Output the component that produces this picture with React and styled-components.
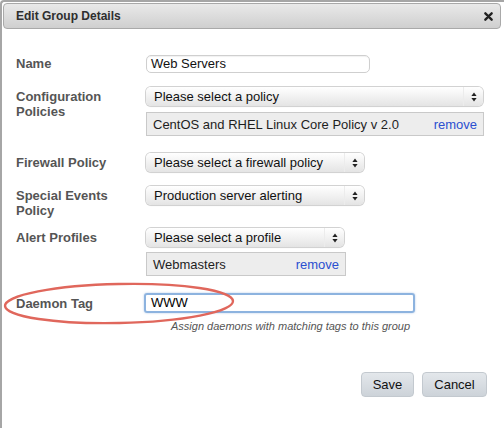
import React from 'react';
import styled, { createGlobalStyle } from 'styled-components';

const GlobalStyle = createGlobalStyle`
  html, body { margin: 0; padding: 0; background: #fff; }
  body { font-family: "Liberation Sans", Arial, Helvetica, sans-serif; }
`;

const Dialog = styled.div`
  box-sizing: border-box;
  width: 504px;
  height: 428px;
  border-top: 2px solid #a6a6a6;
  border-left: 2px solid #a6a6a6;
  border-top-left-radius: 4px;
  padding: 1px 3px 0 1px;
  background: #fff;
`;

const TitleBar = styled.div`
  box-sizing: border-box;
  height: 26px;
  display: flex;
  align-items: center;
  justify-content: space-between;
  padding: 0 7px 0 12px;
  border: 1px solid #a9a9a9;
  border-radius: 4px;
  background: linear-gradient(#e9e9e9, #cfcfcf);
`;

const Title = styled.span`
  font-size: 12px;
  font-weight: bold;
  color: #2e2e2e;
`;

const Close = styled.svg`
  width: 9px;
  height: 9px;
  margin-top: 1px;
`;

const Body = styled.div`
  padding: 26px 14px 0 13px;
`;

const Row = styled.div`
  position: relative;
  display: grid;
  grid-template-columns: 130px 1fr;
  align-items: start;
  margin-top: ${p => p.$mt || 0}px;
`;

const Label = styled.div`
  font-size: 13px;
  font-weight: bold;
  color: #555;
  line-height: 15px;
  padding-top: ${p => (p.$pt === undefined ? 2 : p.$pt)}px;
`;

const Field = styled.div`
  display: flex;
  flex-direction: column;
  align-items: flex-start;
`;

const TextInput = styled.div`
  box-sizing: border-box;
  width: ${p => p.$w}px;
  height: 18px;
  border: 1px solid #cfcfcf;
  border-radius: 5px;
  box-shadow: inset 0 1px 1px rgba(0, 0, 0, 0.06);
  padding-left: 4px;
  font-size: 13px;
  line-height: 16px;
  color: #111;
`;

const FocusInput = styled.div`
  box-sizing: border-box;
  width: 271px;
  height: 20px;
  margin-left: -2px;
  border: 2px solid #8db3df;
  border-radius: 3px;
  box-shadow: 0 0 2px rgba(90, 140, 210, 0.5);
  padding-left: 5px;
  font-size: 13px;
  line-height: 16px;
  color: #000;
`;

const Select = styled.div`
  box-sizing: border-box;
  width: ${p => p.$w}px;
  height: 19px;
  display: flex;
  align-items: center;
  justify-content: space-between;
  border-radius: 5px;
  background: linear-gradient(#ffffff, #f3f3f3 45%, #e4e4e4);
  box-shadow: 0 0 0 1px #d2d2d2, 0 1px 1px rgba(0, 0, 0, 0.12);
  padding-left: 8px;
  font-size: 13px;
  color: #111;
`;

const Arrows = styled.span`
  height: 100%;
  width: 19px;
  display: flex;
  align-items: center;
  justify-content: center;
  border-left: 1px solid #ececec;
`;

const Chosen = styled.div`
  box-sizing: border-box;
  width: ${p => p.$w}px;
  height: 24px;
  margin-top: ${p => p.$mt}px;
  display: flex;
  align-items: center;
  justify-content: space-between;
  padding: 0 6px 0 6px;
  background: #ededed;
  border: 1px solid #c9c9c9;
  font-size: 13px;
  color: #1e1e1e;
`;

const Remove = styled.span`
  color: #2b4fd0;
`;

const Hint = styled.div`
  margin-top: 7px;
  padding-left: 25px;
  font-size: 11px;
  line-height: 13px;
  font-style: italic;
  color: #555;
`;

const Ring = styled.svg`
  position: absolute;
  left: -13px;
  top: -11px;
  width: 232px;
  height: 43px;
  pointer-events: none;
  overflow: visible;
`;

const Footer = styled.div`
  display: flex;
  justify-content: flex-end;
  gap: 8px;
  margin-top: 39px;
`;

const Button = styled.div`
  box-sizing: border-box;
  width: ${p => p.$w}px;
  height: 25px;
  display: flex;
  align-items: center;
  justify-content: center;
  border-radius: 4px;
  border: 1px solid #c3c9cf;
  background: linear-gradient(#e3e7eb, #cdd3d9);
  font-size: 13px;
  color: #111;
`;

function UpDown() {
  return (
    <svg width="6" height="10" viewBox="0 0 6 10">
      <path d="M3 0.5 L5.6 4 L0.4 4 Z" fill="#222" />
      <path d="M3 9.5 L5.6 6 L0.4 6 Z" fill="#222" />
    </svg>
  );
}

function Dropdown({ w, children }) {
  return (
    <Select $w={w}>
      <span>{children}</span>
      <Arrows><UpDown /></Arrows>
    </Select>
  );
}

export default function App() {
  return (
    <>
      <GlobalStyle />
      <Dialog>
        <TitleBar>
          <Title>Edit Group Details</Title>
          <Close viewBox="0 0 10 10">
            <path d="M1.5 1.5 L8.5 8.5 M8.5 1.5 L1.5 8.5" stroke="#222" strokeWidth="2.6" strokeLinecap="round" />
          </Close>
        </TitleBar>
        <Body>
          <Row>
            <Label $pt={1}>Name</Label>
            <Field>
              <TextInput $w={224}>Web Servers</TextInput>
            </Field>
          </Row>

          <Row $mt={14}>
            <Label>Configuration<br />Policies</Label>
            <Field>
              <Dropdown w={337}>Please select a policy</Dropdown>
              <Chosen $w={338} $mt={6}>
                <span>CentOS and RHEL Linux Core Policy v 2.0</span>
                <Remove>remove</Remove>
              </Chosen>
            </Field>
          </Row>

          <Row $mt={17}>
            <Label>Firewall Policy</Label>
            <Field>
              <Dropdown w={218}>Please select a firewall policy</Dropdown>
            </Field>
          </Row>

          <Row $mt={14}>
            <Label>Special Events<br />Policy</Label>
            <Field>
              <Dropdown w={218}>Production server alerting</Dropdown>
            </Field>
          </Row>

          <Row $mt={10}>
            <Label>Alert Profiles</Label>
            <Field>
              <Dropdown w={198}>Please select a profile</Dropdown>
              <Chosen $w={200} $mt={5}>
                <span>Webmasters</span>
                <Remove>remove</Remove>
              </Chosen>
            </Field>
          </Row>

          <Row $mt={17}>
            <Label $pt={3}>Daemon Tag</Label>
            <Field>
              <FocusInput>WWW</FocusInput>
              <Hint>Assign daemons with matching tags to this group</Hint>
            </Field>
            <Ring viewBox="0 0 232 43">
              <ellipse cx="116" cy="21.5" rx="114" ry="19.5" fill="none" stroke="#e0675c" strokeWidth="2.4" transform="rotate(-1.2 116 21.5)" />
            </Ring>
          </Row>

          <Footer>
            <Button $w={53}>Save</Button>
            <Button $w={65}>Cancel</Button>
          </Footer>
        </Body>
      </Dialog>
    </>
  );
}
